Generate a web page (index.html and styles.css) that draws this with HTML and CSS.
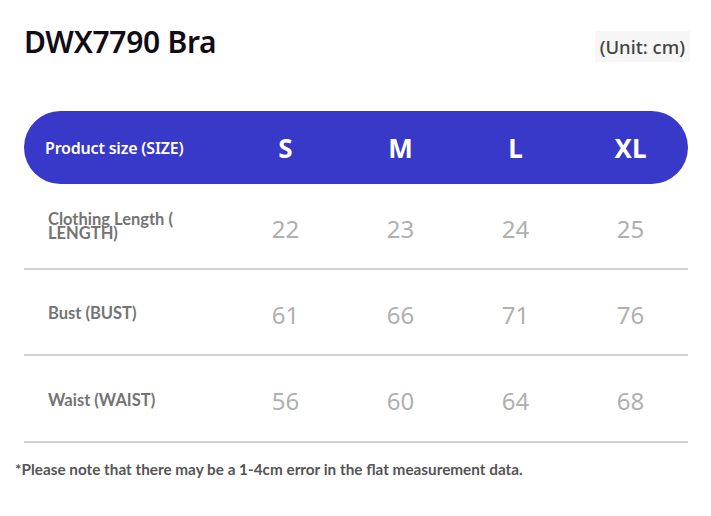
FILE: index.html
```html
<!DOCTYPE html>
<html>
<head>
<meta charset="utf-8">
<link rel="stylesheet" href="styles.css">
</head>
<body>
<div class="page">
  <div class="header">
    <h1 class="title">DWX7790 Bra</h1>
    <span class="unit">(Unit: cm)</span>
  </div>
  <div class="table">
    <div class="head">
      <div class="head-label"><span>Product size (SIZE)</span></div>
      <div class="size">S</div>
      <div class="size">M</div>
      <div class="size">L</div>
      <div class="size">XL</div>
    </div>
    <div class="row">
      <div class="label label-wrap">Clothing Length ( LENGTH)</div>
      <div class="val">22</div>
      <div class="val">23</div>
      <div class="val">24</div>
      <div class="val">25</div>
    </div>
    <div class="row">
      <div class="label">Bust (BUST)</div>
      <div class="val">61</div>
      <div class="val">66</div>
      <div class="val">71</div>
      <div class="val">76</div>
    </div>
    <div class="row row-last">
      <div class="label">Waist (WAIST)</div>
      <div class="val">56</div>
      <div class="val">60</div>
      <div class="val">64</div>
      <div class="val">68</div>
    </div>
  </div>
  <p class="note">*Please note that there may be a 1-4cm error in the flat measurement data.</p>
</div>
</body>
</html>
```
FILE: styles.css
```css
html, body {
  margin: 0;
  padding: 0;
  background: #ffffff;
}
.page {
  width: 711px;
  height: 516px;
  font-family: "Noto Sans", "Open Sans", sans-serif;
}
.header {
  display: flex;
  justify-content: space-between;
  align-items: flex-start;
  padding: 22px 21px 0 24px;
  height: 89px;
  box-sizing: border-box;
}
.title {
  margin: 0;
  font-size: 30px;
  font-weight: 600;
  color: #120c16;
  line-height: 40px;
  letter-spacing: -0.3px;
}
.unit {
  margin-top: 9px;
  background: #f6f6f6;
  color: #444444;
  font-size: 18.5px;
  font-weight: 500;
  padding: 4px 5px;
  line-height: 23px;
}
.table {
  margin: 22px 23px 0 24px;
}
.head {
  display: grid;
  grid-template-columns: 204px repeat(4, 1fr);
  align-items: center;
  height: 73px;
  background: #3838c9;
  border-radius: 37px;
  color: #ffffff;
}
.head-label {
  padding-left: 21px;
  font-size: 16px;
  font-weight: 600;
  letter-spacing: -0.2px;
}
.size {
  text-align: center;
  font-size: 26px;
  font-weight: 700;
}
.row {
  display: grid;
  grid-template-columns: 204px repeat(4, 1fr);
  align-items: center;
  height: 86px;
  border-bottom: 2px solid #d2d2d2;
  box-sizing: border-box;
}
.row-last {
  height: 87px;
}
.label {
  padding-left: 24px;
  font-family: "Lato", "Noto Sans", sans-serif;
  font-weight: 700;
  font-size: 16.5px;
  color: #747474;
  padding-top: 2px;
}
.label-wrap {
  width: 135px;
  line-height: 14px;
  box-sizing: content-box;
  padding-top: 0;
}
.val {
  text-align: center;
  font-size: 24px;
  font-weight: 400;
  color: #b0b0b0;
  padding-top: 4px;
}
.note {
  margin: 17px 0 0 15px;
  font-family: "Lato", "Noto Sans", sans-serif;
  font-weight: 700;
  font-size: 15.3px;
  color: #555555;
}
```
